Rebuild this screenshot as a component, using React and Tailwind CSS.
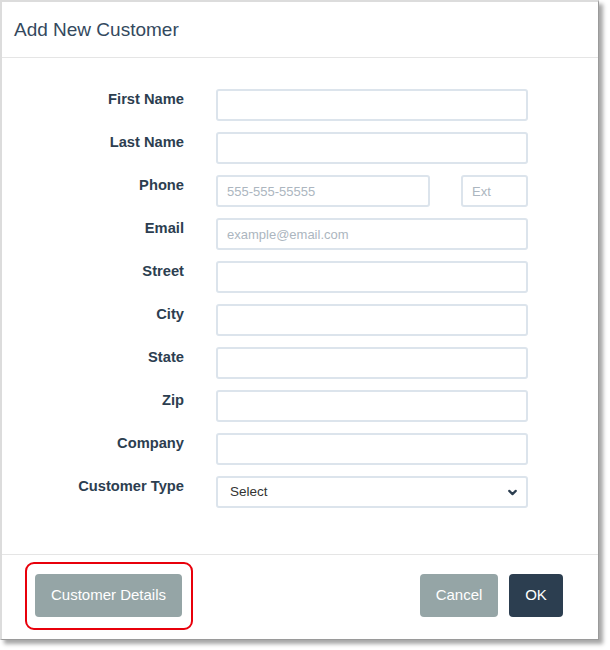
import React from "react";
import { ChevronDown } from "lucide-react";

const fields = [
  { label: "First Name" },
  { label: "Last Name" },
  { label: "Phone", type: "phone" },
  { label: "Email", placeholder: "example@email.com" },
  { label: "Street" },
  { label: "City" },
  { label: "State" },
  { label: "Zip" },
  { label: "Company" },
  { label: "Customer Type", type: "select" },
];

const inputCls =
  "h-[32px] border-2 border-[#dce4ec] rounded-[3px] bg-white px-[9px] text-[13px] text-[#2c3e50] placeholder-[#acb6c0] outline-none";

function Field({ field }) {
  let control;
  if (field.type === "phone") {
    control = (
      <div className="flex gap-[31px] w-[312px]">
        <input className={`${inputCls} w-[214px]`} placeholder="555-555-55555" />
        <input className={`${inputCls} w-[67px]`} placeholder="Ext" />
      </div>
    );
  } else if (field.type === "select") {
    control = (
      <div className={`${inputCls} w-[312px] flex items-center justify-between pl-[12px] pr-[7px]`}>
        <span className="text-[13.5px] text-[#333]">Select</span>
        <ChevronDown size={13} strokeWidth={4} className="text-[#2c3e50]" />
      </div>
    );
  } else {
    control = (
      <input className={`${inputCls} w-[312px]`} placeholder={field.placeholder || ""} />
    );
  }

  return (
    <div className="flex items-start gap-[32px]">
      <label className="w-[182px] text-right font-bold text-[14.7px] leading-[20px] text-[#2c3e50]">
        {field.label}
      </label>
      {control}
    </div>
  );
}

export default function App() {
  return (
    <div className="w-[610px] h-[650px] bg-white" style={{ fontFamily: '"Liberation Sans", Arial, sans-serif' }}>
      <div className="w-[599px] h-[640px] bg-white border-t-2 border-l-2 border-[#dcdcdc] border-r border-b border-r-[#9a9a9a] border-b-[#9a9a9a] shadow-[4px_4px_4px_rgba(0,0,0,0.35)] flex flex-col">
        {/* Header */}
        <div className="h-[56px] border-b border-[#e5e5e5] flex items-center px-3">
          <h2 className="text-[19px] text-[#34495e] leading-none">Add New Customer</h2>
        </div>

        {/* Form */}
        <div className="flex-1 pt-[31px] flex flex-col gap-[11px]">
          {fields.map((f) => (
            <Field key={f.label} field={f} />
          ))}
        </div>

        {/* Footer */}
        <div className="h-[85px] border-t border-[#e5e5e5] flex items-center justify-between pl-[33px] pr-[35px] pb-[3px]">
          <div className="relative">
            <button className="h-[43px] w-[147px] rounded-[4px] bg-[#95a5a6] text-white text-[15px]">
              Customer Details
            </button>
            <div className="absolute -left-[10px] -top-[12px] w-[168px] h-[68px] border-2 border-[#e8000b] rounded-[9px]" />
          </div>
          <div className="flex gap-[11px]">
            <button className="h-[43px] w-[78px] rounded-[4px] bg-[#95a5a6] text-white text-[15px]">
              Cancel
            </button>
            <button className="h-[43px] w-[54px] rounded-[4px] bg-[#2c3e50] text-white text-[15px]">
              OK
            </button>
          </div>
        </div>
      </div>
    </div>
  );
}
